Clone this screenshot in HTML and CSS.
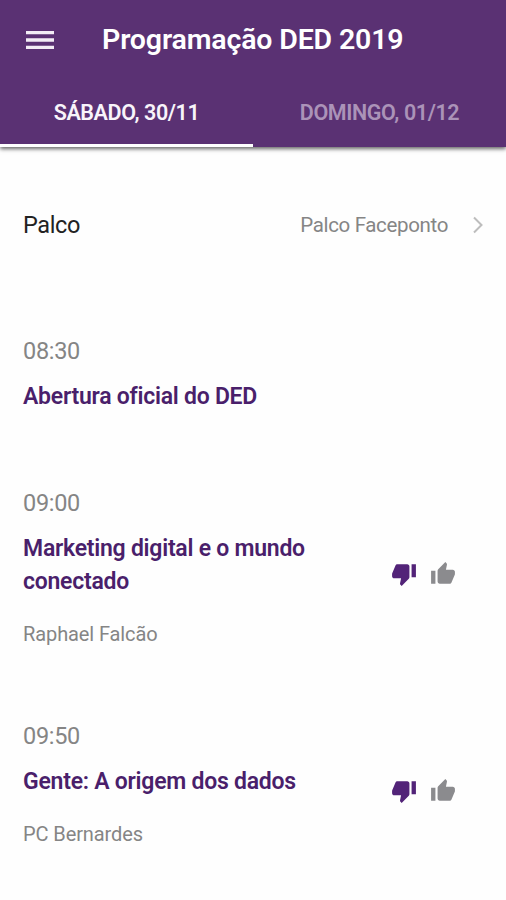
FILE: index.html
```html
<!DOCTYPE html>
<html lang="pt-BR">
<head>
    <meta charset="UTF-8">
    <meta name="viewport" content="width=device-width, initial-scale=1.0">
    <title>Programação DED 2019</title>
    <link rel="stylesheet" href="styles.css">
</head>
<body>
    <svg class="sprite">
        <symbol id="thumb-up" viewBox="0 0 24 24">
            <path d="M1 21h4V9H1v12zm22-11c0-1.1-.9-2-2-2h-6.31l.95-4.57.03-.32c0-.41-.17-.79-.44-1.06L14.17 1 7.59 7.59C7.22 7.95 7 8.45 7 9v10c0 1.1.9 2 2 2h9c.83 0 1.54-.5 1.84-1.22l3.02-7.05c.09-.23.14-.47.14-.73v-2z"/>
        </symbol>
        <symbol id="thumb-down" viewBox="0 0 24 24">
            <path d="M15 3H6c-.83 0-1.54.5-1.84 1.22l-3.02 7.05c-.09.23-.14.47-.14.73v2c0 1.1.9 2 2 2h6.31l-.95 4.57-.03.32c0 .41.17.79.44 1.06L9.83 23l6.59-6.59c.36-.36.58-.86.58-1.41V5c0-1.1-.9-2-2-2zm4 0v12h4V3h-4z"/>
        </symbol>
    </svg>

    <header class="header">
        <div class="toolbar">
            <svg class="menu" viewBox="0 0 28 20"><path d="M0 2.6h28M0 10h28M0 17.4h28"/></svg>
            <h1>Programação DED 2019</h1>
        </div>
        <nav class="tabs">
            <a class="tab active">SÁBADO, 30/11</a>
            <a class="tab">DOMINGO, 01/12</a>
        </nav>
    </header>

    <main>
        <div class="stage">
            <span class="stage-label">Palco</span>
            <span class="stage-value">Palco Faceponto</span>
            <svg class="chevron" viewBox="0 0 12 18"><path d="M2 1.5 9.5 9 2 16.5"/></svg>
        </div>

        <div class="item">
            <div class="info">
                <p class="time">08:30</p>
                <h2>Abertura oficial do DED</h2>
            </div>
        </div>

        <div class="item">
            <div class="info">
                <p class="time">09:00</p>
                <h2>Marketing digital e o mundo conectado</h2>
                <p class="speaker">Raphael Falcão</p>
            </div>
            <div class="votes">
                <svg class="down"><use href="#thumb-down"/></svg>
                <svg class="up"><use href="#thumb-up"/></svg>
            </div>
        </div>

        <div class="item">
            <div class="info">
                <p class="time">09:50</p>
                <h2>Gente: A origem dos dados</h2>
                <p class="speaker">PC Bernardes</p>
            </div>
            <div class="votes">
                <svg class="down"><use href="#thumb-down"/></svg>
                <svg class="up"><use href="#thumb-up"/></svg>
            </div>
        </div>
    </main>
</body>
</html>
```
FILE: styles.css
```css
* {
    padding: 0;
    margin: 0;
    box-sizing: border-box;
    font-family: Roboto, 'Liberation Sans', sans-serif;
}

body {
    background: #fefefe;
}

.sprite {
    display: none;
}

.header {
    background: #5a3173;
    color: white;
    height: 147px;
    box-shadow: 0 2px 4px rgba(0, 0, 0, 0.6);
}

.toolbar {
    display: flex;
    align-items: center;
    height: 79px;
    padding-left: 26px;
}

.menu {
    width: 28px;
    height: 20px;
    margin-right: 48px;
    stroke: #f3edf6;
    stroke-width: 3.4;
}

h1 {
    font-size: 28.5px;
    font-weight: 600;
    letter-spacing: -0.15px;
}

.tabs {
    display: flex;
    height: 68px;
}

.tab {
    width: 50%;
    padding-top: 20px;
    text-align: center;
    font-size: 21.5px;
    font-weight: 600;
    line-height: 28px;
    letter-spacing: -0.4px;
    color: #ab93b8;
}

.tab.active {
    color: #f8f4fa;
    border-bottom: 3px solid white;
}

.stage {
    display: flex;
    align-items: center;
    height: 158px;
    padding: 0 22px 2px 23px;
}

.stage-label {
    flex: 1;
    font-size: 23.5px;
    letter-spacing: -0.4px;
    color: #222;
}

.stage-value {
    font-size: 20.5px;
    letter-spacing: -0.35px;
    color: #858585;
}

.chevron {
    width: 12px;
    height: 18px;
    margin-left: 24px;
    fill: none;
    stroke: #bdbdbd;
    stroke-width: 2;
}

.item {
    display: flex;
    align-items: center;
    justify-content: space-between;
    padding: 32px 50px 44px 23px;
}

.info {
    width: 320px;
}

.time {
    font-size: 23.5px;
    line-height: 28px;
    letter-spacing: -0.3px;
    color: #858585;
}

h2 {
    margin-top: 15px;
    font-size: 23px;
    font-weight: 600;
    line-height: 33px;
    letter-spacing: -0.25px;
    color: #4a1f6b;
}

.speaker {
    margin-top: 24px;
    font-size: 20px;
    line-height: 24px;
    letter-spacing: -0.1px;
    color: #858585;
}

.votes {
    display: flex;
    gap: 13px;
    margin-top: 13px;
}

.votes svg {
    width: 26px;
    height: 26px;
}

.down {
    fill: #522378;
}

.up {
    fill: #8b8b8e;
}
```
